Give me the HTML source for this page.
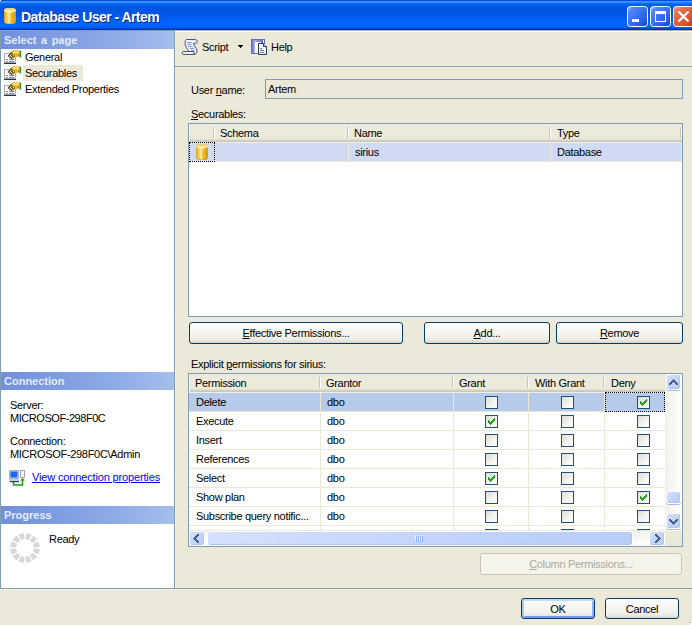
<!DOCTYPE html><html><head><meta charset="utf-8"><style>
*{box-sizing:border-box;margin:0;padding:0}
html,body{width:692px;height:625px;overflow:hidden;background:#ECE9D8}
body{position:relative;font-family:"Liberation Sans",sans-serif;font-size:11px;color:#000;letter-spacing:-0.3px}
.a{position:absolute}
.t{position:absolute;white-space:pre;line-height:13px}
svg{position:absolute;overflow:visible}
#title{left:0;top:0;width:692px;height:30px;background:linear-gradient(#0050E6 0px,#0050E6 1px,#3D95FF 1px,#3D95FF 2px,#2C89FF 2px,#2C89FF 3px,#0B6FFB 3px,#0B6FFB 4px,#0063F2 4px,#0063F2 5px,#005CEA 5px,#005CEA 6px,#0059E6 6px,#0059E6 7px,#0057E4 7px,#0057E4 8px,#0055E1 8px,#0055E1 9px,#0055E1 9px,#0055E1 10px,#0055E1 10px,#0055E1 11px,#0055E2 11px,#0055E2 12px,#0056E4 12px,#0056E4 13px,#0057E6 13px,#0057E6 14px,#0058E8 14px,#0058E8 15px,#0059EA 15px,#0059EA 16px,#005AEC 16px,#005AEC 17px,#005CEF 17px,#005CEF 18px,#005EF2 18px,#005EF2 19px,#0060F5 19px,#0060F5 20px,#0062F8 20px,#0062F8 21px,#0064FB 21px,#0064FB 22px,#0066FE 22px,#0066FE 23px,#0066FF 23px,#0066FF 24px,#0066FF 24px,#0066FF 25px,#0066FF 25px,#0066FF 26px,#0064FC 26px,#0064FC 27px,#005CF2 27px,#005CF2 28px,#0048D8 28px,#0048D8 29px,#0032B4 29px,#0032B4 30px)}
.ttl{left:21px;top:9px;font:bold 14px "Liberation Sans",sans-serif;color:#fff;letter-spacing:-0.55px;text-shadow:1px 1px 0 #0A1A80;line-height:17px}
.side{left:0;top:30px;width:175px;height:559px;background:#fff;border-top:1px solid #7F9DB9;border-left:1px solid #7F9DB9;border-right:1px solid #7F9DB9;border-bottom:1px solid #7F9DB9}
.hdr{position:absolute;left:1px;width:173px;height:18px;background:linear-gradient(90deg,#7190DC,#8AA8E6 60%,#A6BEEC);color:#E4ECFC;font-weight:bold;letter-spacing:0;word-spacing:1.5px;padding-left:3px;line-height:18px;font-size:11px}
.border{border:1px solid #7F9DB9}
.btn{position:absolute;height:22px;border:1px solid #003C74;border-radius:3px;background:linear-gradient(#FFFFFF,#F8F8F5 25%,#F1F0EB 75%,#E8E6DE 88%,#D8D2C6);text-align:center;line-height:21px}
.def{box-shadow:inset 0 2px 0 #C6DEFC,inset 2px 0 0 #A8C6F2,inset 0 -2px 0 #7A98EC,inset -2px 0 0 #90B0F0}
.grid{position:absolute;background:#fff;border:1px solid #7F9DB9;overflow:hidden}
.gh{position:absolute;left:0;top:0;height:19px;box-shadow:inset 1px 0 0 #fff;background:linear-gradient(#EBEADB 0,#EBEADB 15px,#E2DECD 15px,#E2DECD 16px,#D6D2C0 16px,#D6D2C0 17px,#CBC7B8 17px,#CBC7B8 18px,#F2F0E6 18px)}
.sep{position:absolute;top:3px;width:2px;height:11px;border-left:1px solid #C7C5B2;border-right:1px solid #fff}
.gl{background:#EBE8D8}
.glv{position:absolute;width:1px;background:#EBE8D8}
.cb{position:absolute;width:13px;height:13px;border:1px solid #1C5180;background:linear-gradient(135deg,#DCDCD7,#F5F4EF 60%,#FFFFFF)}
.u{text-decoration:underline}
.sb{border:1px solid #fff;border-radius:3px;background:linear-gradient(135deg,#D4E0FD,#C6D5FB 45%,#B8CCF8);box-shadow:inset -1px -1px 0 #B0C4F0}
</style></head><body>
<div id="title" class="a"></div><div class="a" style="left:0;top:0;width:1px;height:1px;background:#F0F0F0"></div>
<div class="t ttl">Database User - Artem</div>
<svg width="12" height="16" style="left:4px;top:8px"><defs><linearGradient id="dbt" x1="0" x2="1" y1="0" y2="0"><stop offset="0" stop-color="#D9A020"/><stop offset="0.15" stop-color="#F0C040"/><stop offset="0.45" stop-color="#F8EAA8"/><stop offset="0.6" stop-color="#EDB828"/><stop offset="1" stop-color="#D89A00"/></linearGradient><linearGradient id="dbtt" x1="0" x2="0" y1="0" y2="1"><stop offset="0" stop-color="#E8C860"/><stop offset="1" stop-color="#FFF8D0"/></linearGradient></defs><path d="M2 0 H10 L12 2 V14 L10 16 H2 L0 14 V2 Z" fill="url(#dbt)"/><path d="M2 0 H10 L12 2 V3 Q6 6 0 3 V2 Z" fill="url(#dbtt)"/><path d="M0 14 Q6 17 12 14 L10 16 H2 Z" fill="#C08810" opacity="0.6"/></svg>
<svg width="21" height="21" style="left:627px;top:6px"><defs><linearGradient id="gmin" x1="0" y1="0" x2="1" y2="1"><stop offset="0" stop-color="#A8C4FC"/><stop offset="0.2" stop-color="#4A86F6"/><stop offset="0.7" stop-color="#2A62EA"/><stop offset="1" stop-color="#1840C8"/></linearGradient></defs><rect x="0.5" y="0.5" width="20" height="20" rx="3" fill="url(#gmin)" stroke="#fff" stroke-width="1"/><rect x="5" y="13" width="7" height="3" fill="#fff"/></svg>
<svg width="21" height="21" style="left:650px;top:6px"><defs><linearGradient id="gmax" x1="0" y1="0" x2="1" y2="1"><stop offset="0" stop-color="#A8C4FC"/><stop offset="0.2" stop-color="#4A86F6"/><stop offset="0.7" stop-color="#2A62EA"/><stop offset="1" stop-color="#1840C8"/></linearGradient></defs><rect x="0.5" y="0.5" width="20" height="20" rx="3" fill="url(#gmax)" stroke="#fff" stroke-width="1"/><path d="M5 5 H16 V16 H5 Z M6 8 V15 H15 V8 Z" fill="#fff" fill-rule="evenodd"/></svg>
<svg width="21" height="21" style="left:673px;top:6px"><defs><linearGradient id="gc" x1="0" y1="0" x2="1" y2="1"><stop offset="0" stop-color="#F4A48A"/><stop offset="0.25" stop-color="#E4704E"/><stop offset="0.7" stop-color="#D8562E"/><stop offset="1" stop-color="#C03A14"/></linearGradient></defs><rect x="0.5" y="0.5" width="20" height="20" rx="3" fill="url(#gc)" stroke="#fff" stroke-width="1"/><path d="M5.5 5.5 L15.5 15.5 M15.5 5.5 L5.5 15.5" stroke="#fff" stroke-width="2.2"/></svg>
<div class="a side"></div>
<div class="hdr" style="top:31px">Select a page</div>
<svg width="18" height="16" style="left:3px;top:49px"><rect x="1.5" y="4.5" width="11" height="9" fill="#fff" stroke="#A8A8BC" stroke-width="1"/><rect x="1" y="4" width="12" height="1" fill="#A8A8F0"/><rect x="1" y="14" width="12" height="1" fill="#303030"/><rect x="3" y="10" width="2" height="1" fill="#8080D0"/><rect x="6" y="10" width="5" height="1" fill="#8080D0"/><rect x="3" y="12" width="2" height="1" fill="#8080D0"/><rect x="6" y="12" width="5" height="1" fill="#8080D0"/><path d="M7.5 3 C9.5 0.8 13 0.5 16.5 1.5 L16.5 7 C14.5 8 12.5 8 10.5 9 L7.5 6 Z" fill="#F4B020"/><path d="M10 2 C12.5 1.2 14.5 1.3 16 2 L15.5 4.5 C13.5 4 11.5 4 10 5 Z" fill="#FFDC70"/><path d="M15.5 5 L16.5 5 L16.5 7 L14 7.8 Z" fill="#E08000"/><path d="M4.5 7 L8 3 L12 7 L8.5 11 Z" fill="#5A5A30"/><path d="M6 7h1v1h-1zM8 5h1v1h-1zM8 7h1v1h-1zM7 9h1v1h-1zM9 8h1v1h-1zM10 6h1v1h-1zM7 6h1v1h-1z" fill="#F8E838"/><rect x="16.5" y="1.5" width="1.5" height="7" fill="#20A030"/></svg>
<svg width="18" height="16" style="left:3px;top:65px"><rect x="1.5" y="4.5" width="11" height="9" fill="#fff" stroke="#A8A8BC" stroke-width="1"/><rect x="1" y="4" width="12" height="1" fill="#A8A8F0"/><rect x="1" y="14" width="12" height="1" fill="#303030"/><rect x="3" y="10" width="2" height="1" fill="#8080D0"/><rect x="6" y="10" width="5" height="1" fill="#8080D0"/><rect x="3" y="12" width="2" height="1" fill="#8080D0"/><rect x="6" y="12" width="5" height="1" fill="#8080D0"/><path d="M7.5 3 C9.5 0.8 13 0.5 16.5 1.5 L16.5 7 C14.5 8 12.5 8 10.5 9 L7.5 6 Z" fill="#F4B020"/><path d="M10 2 C12.5 1.2 14.5 1.3 16 2 L15.5 4.5 C13.5 4 11.5 4 10 5 Z" fill="#FFDC70"/><path d="M15.5 5 L16.5 5 L16.5 7 L14 7.8 Z" fill="#E08000"/><path d="M4.5 7 L8 3 L12 7 L8.5 11 Z" fill="#5A5A30"/><path d="M6 7h1v1h-1zM8 5h1v1h-1zM8 7h1v1h-1zM7 9h1v1h-1zM9 8h1v1h-1zM10 6h1v1h-1zM7 6h1v1h-1z" fill="#F8E838"/><rect x="16.5" y="1.5" width="1.5" height="7" fill="#20A030"/></svg>
<svg width="18" height="16" style="left:3px;top:81px"><rect x="1.5" y="4.5" width="11" height="9" fill="#fff" stroke="#A8A8BC" stroke-width="1"/><rect x="1" y="4" width="12" height="1" fill="#A8A8F0"/><rect x="1" y="14" width="12" height="1" fill="#303030"/><rect x="3" y="10" width="2" height="1" fill="#8080D0"/><rect x="6" y="10" width="5" height="1" fill="#8080D0"/><rect x="3" y="12" width="2" height="1" fill="#8080D0"/><rect x="6" y="12" width="5" height="1" fill="#8080D0"/><path d="M7.5 3 C9.5 0.8 13 0.5 16.5 1.5 L16.5 7 C14.5 8 12.5 8 10.5 9 L7.5 6 Z" fill="#F4B020"/><path d="M10 2 C12.5 1.2 14.5 1.3 16 2 L15.5 4.5 C13.5 4 11.5 4 10 5 Z" fill="#FFDC70"/><path d="M15.5 5 L16.5 5 L16.5 7 L14 7.8 Z" fill="#E08000"/><path d="M4.5 7 L8 3 L12 7 L8.5 11 Z" fill="#5A5A30"/><path d="M6 7h1v1h-1zM8 5h1v1h-1zM8 7h1v1h-1zM7 9h1v1h-1zM9 8h1v1h-1zM10 6h1v1h-1zM7 6h1v1h-1z" fill="#F8E838"/><rect x="16.5" y="1.5" width="1.5" height="7" fill="#20A030"/></svg>
<div class="t" style="left:25px;top:51px">General</div>
<div class="a" style="left:23px;top:65px;width:60px;height:16px;background:#ECE9D8"></div>
<div class="t" style="left:25px;top:67px">Securables</div>
<div class="t" style="left:25px;top:83px">Extended Properties</div>
<div class="hdr" style="top:372px">Connection</div>
<div class="t" style="left:10px;top:399px">Server:</div>
<div class="t" style="left:10px;top:412px;letter-spacing:-0.45px">MICROSOF-298F0C</div>
<div class="t" style="left:10px;top:435px">Connection:</div>
<div class="t" style="left:10px;top:448px">MICROSOF-298F0C\Admin</div>
<div class="t u" style="left:32px;top:471px;color:#0000FF;letter-spacing:-0.15px">View connection properties</div>
<svg width="17" height="17" style="left:9px;top:469px"><rect x="0.5" y="1.5" width="9" height="8" fill="#D8DCE8" stroke="#A8B0C0"/><rect x="1.5" y="2.5" width="7" height="6" fill="#1A68F0"/><rect x="0" y="10" width="10" height="3" fill="#C8CCE0"/><rect x="1" y="12" width="9" height="1.2" fill="#303880"/><rect x="11.5" y="1.5" width="4" height="7" fill="#F0F4FC" stroke="#A0A8B8"/><path d="M4.5 13 V16 H13.5 V10" stroke="#20A010" stroke-width="1.6" fill="none"/><path d="M11 11.5 L13.5 9 L16 11.5 Z" fill="#20A010"/></svg>
<div class="hdr" style="top:506px">Progress</div>
<div class="t" style="left:49px;top:533px">Ready</div>
<svg width="692" height="625" style="left:0;top:0"><path d="M39.97 548.92 L38.42 554.69 L33.05 552.02 L33.98 548.55 Z M37.51 556.28 L33.28 560.51 L29.97 555.50 L32.50 552.97 Z M31.69 561.42 L25.92 562.97 L25.55 556.98 L29.02 556.05 Z M24.08 562.97 L18.31 561.42 L20.98 556.05 L24.45 556.98 Z M16.72 560.51 L12.49 556.28 L17.50 552.97 L20.03 555.50 Z M11.58 554.69 L10.03 548.92 L16.02 548.55 L16.95 552.02 Z M10.03 547.08 L11.58 541.31 L16.95 543.98 L16.02 547.45 Z M12.49 539.72 L16.72 535.49 L20.03 540.50 L17.50 543.03 Z M18.31 534.58 L24.08 533.03 L24.45 539.02 L20.98 539.95 Z M25.92 533.03 L31.69 534.58 L29.02 539.95 L25.55 539.02 Z M33.28 535.49 L37.51 539.72 L32.50 543.03 L29.97 540.50 Z M38.42 541.31 L39.97 547.08 L33.98 547.45 L33.05 543.98 Z" fill="#D8D8D8"/></svg>
<div class="a" style="left:175px;top:31px;width:1px;height:557px;background:#F4F0DE"></div>
<div class="a" style="left:175px;top:30px;width:517px;height:1px;background:#BCB49C"></div>
<div class="a" style="left:175px;top:31px;width:517px;height:1px;background:#fff"></div>
<div class="a" style="left:175px;top:65px;width:517px;height:1px;background:#F4F0DE"></div>
<div class="a" style="left:175px;top:66px;width:517px;height:1px;background:#7F9DB9"></div>
<div class="a" style="left:175px;top:67px;width:517px;height:1px;background:#F6F2E2"></div>
<div class="t" style="left:202px;top:41px">Script</div>
<div class="t" style="left:271px;top:41px">Help</div>
<svg width="16" height="16" style="left:182px;top:39px"><path d="M4.5 0.5 H13.5 C15.8 0.5 15.8 4.5 13.5 4.5 H11.5 C11.5 6.5 15 9 15 12 C15 14 14 15.5 12 15.5 H7 V12.5 C6 10.5 3 8 3 4.5 C3 2 3.5 0.5 4.5 0.5 Z" fill="#EEF2FC" stroke="#4A5670" stroke-width="1"/><path d="M12 2.5 H13.5" stroke="#B8C8EC" stroke-width="1.5"/><path d="M5 3.5 H9.5 M5 5.5 H9.5 M6 7.5 H10.5 M8 9.5 H12 M9 11.5 H12.5" stroke="#7C98DC" stroke-width="1"/><path d="M1.5 12.5 H11 C12.8 12.5 12.8 15.5 11 15.5 H1.5 C-0.2 15.5 -0.2 12.5 1.5 12.5 Z" fill="#DCE4F8" stroke="#4A5670" stroke-width="1"/><path d="M2 14 H10" stroke="#F8FAFF" stroke-width="1"/></svg>
<svg width="17" height="17" style="left:251px;top:39px"><defs><linearGradient id="hb" x1="0" x2="1"><stop offset="0" stop-color="#6464C0"/><stop offset="0.25" stop-color="#A8B0F4"/><stop offset="0.5" stop-color="#8C90E0"/><stop offset="1" stop-color="#5C5CB8"/></linearGradient></defs><rect x="0.5" y="0.5" width="13" height="14" fill="url(#hb)" stroke="#6A6AB8" stroke-width="1"/><rect x="12" y="1" width="1" height="6" fill="#F0F0FF"/><rect x="4" y="3" width="6" height="11" fill="#fff"/><path d="M7.5 4.5 H12.5 L15.5 7.5 V15.5 H7.5 Z" fill="#F4F6FC" stroke="#2A3A58" stroke-width="1"/><path d="M12.5 4.5 V7.5 H15.5" fill="#D8E0F0" stroke="#2A3A58" stroke-width="1"/><path d="M9 9.5 H11 M9 11.5 H13 M9 13.5 H13" stroke="#6A7AA0" stroke-width="1"/></svg>
<div class="a" style="left:238px;top:45px;width:5px;height:1px;background:#000"></div><div class="a" style="left:239px;top:46px;width:3px;height:1px;background:#000"></div><div class="a" style="left:240px;top:47px;width:1px;height:1px;background:#000"></div>
<div class="t" style="left:191px;top:84px">User <span class="u">n</span>ame:</div>
<div class="a border" style="left:265px;top:79px;width:418px;height:20px;background:#ECE9D8"></div>
<div class="t" style="left:268px;top:83px">Artem</div>
<div class="t" style="left:191px;top:108px"><span class="u">S</span>ecurables:</div>
<div class="grid" style="left:188px;top:123px;width:495px;height:194px"><div class="gh" style="width:493px"></div><div class="sep" style="left:24px"></div><div class="sep" style="left:158px"></div><div class="sep" style="left:360px"></div><div class="sep" style="left:491px"></div><div class="t" style="left:31px;top:3px">Schema</div><div class="t" style="left:165px;top:3px">Name</div><div class="t" style="left:368px;top:3px">Type</div><div class="a" style="left:0;top:19px;width:492px;height:18px;background:#D0DAF2"></div><div class="a gl" style="left:0;top:37px;width:493px;height:1px"></div><div class="glv" style="left:25px;top:18px;height:20px"></div><div class="glv" style="left:159px;top:18px;height:20px"></div><div class="glv" style="left:361px;top:18px;height:20px"></div><div class="glv" style="left:492px;top:18px;height:20px"></div><div class="a" style="left:0;top:18px;width:26px;height:20px;border:1px dotted #000"></div><div class="t" style="left:166px;top:22px">sirius</div><svg width="12" height="16" style="left:7px;top:20px"><defs><linearGradient id="dbg" x1="0" x2="1" y1="0" y2="0"><stop offset="0" stop-color="#D9A020"/><stop offset="0.15" stop-color="#F0C040"/><stop offset="0.45" stop-color="#F8EAA8"/><stop offset="0.6" stop-color="#EDB828"/><stop offset="1" stop-color="#D89A00"/></linearGradient><linearGradient id="dbtg" x1="0" x2="0" y1="0" y2="1"><stop offset="0" stop-color="#E8C860"/><stop offset="1" stop-color="#FFF8D0"/></linearGradient></defs><path d="M2 0 H10 L12 2 V14 L10 16 H2 L0 14 V2 Z" fill="url(#dbg)"/><path d="M2 0 H10 L12 2 V3 Q6 6 0 3 V2 Z" fill="url(#dbtg)"/><path d="M0 14 Q6 17 12 14 L10 16 H2 Z" fill="#C08810" opacity="0.6"/></svg><div class="t" style="left:368px;top:22px">Database</div></div>
<div class="btn" style="left:189px;top:322px;width:214px"><span class="u">E</span>ffective Permissions...</div>
<div class="btn" style="left:424px;top:322px;width:126px"><span class="u">A</span>dd...</div>
<div class="btn" style="left:556px;top:322px;width:127px"><span class="u">R</span>emove</div>
<div class="t" style="left:191px;top:358px">Explicit <span class="u">p</span>ermissions for sirius:</div>
<div class="grid" style="left:188px;top:373px;width:495px;height:174px"><div class="gh" style="width:476px"></div><div class="sep" style="left:130px"></div><div class="sep" style="left:263px"></div><div class="sep" style="left:338px"></div><div class="sep" style="left:414px"></div><div class="t" style="left:6px;top:3px">Permission</div><div class="t" style="left:137px;top:3px">Grantor</div><div class="t" style="left:270px;top:3px">Grant</div><div class="t" style="left:346px;top:3px">With Grant</div><div class="t" style="left:422px;top:3px">Deny</div><div class="a" style="left:0;top:19px;width:476px;height:18px;background:#B6CAEA"></div><div class="a gl" style="left:0;top:37px;width:476px;height:1px"></div><div class="t" style="left:7px;top:22px">Delete</div><div class="t" style="left:138px;top:22px">dbo</div><div class="cb" style="left:296px;top:22px"></div><div class="cb" style="left:372px;top:22px"></div><div class="cb" style="left:448px;top:22px"><svg width="11" height="11" style="left:0;top:0" shape-rendering="crispEdges"><path d="M8 2h1v1h-1zM7 3h2v1h-2zM2 4h1v1h-1zM6 4h3v1h-3zM2 5h2v1h-2zM5 5h3v1h-3zM2 6h5v1h-5zM3 7h3v1h-3zM4 8h1v1h-1z" fill="#21A121"/></svg></div><div class="a gl" style="left:0;top:56px;width:476px;height:1px"></div><div class="t" style="left:7px;top:41px">Execute</div><div class="t" style="left:138px;top:41px">dbo</div><div class="cb" style="left:296px;top:41px"><svg width="11" height="11" style="left:0;top:0" shape-rendering="crispEdges"><path d="M8 2h1v1h-1zM7 3h2v1h-2zM2 4h1v1h-1zM6 4h3v1h-3zM2 5h2v1h-2zM5 5h3v1h-3zM2 6h5v1h-5zM3 7h3v1h-3zM4 8h1v1h-1z" fill="#21A121"/></svg></div><div class="cb" style="left:372px;top:41px"></div><div class="cb" style="left:448px;top:41px"></div><div class="a gl" style="left:0;top:75px;width:476px;height:1px"></div><div class="t" style="left:7px;top:60px">Insert</div><div class="t" style="left:138px;top:60px">dbo</div><div class="cb" style="left:296px;top:60px"></div><div class="cb" style="left:372px;top:60px"></div><div class="cb" style="left:448px;top:60px"></div><div class="a gl" style="left:0;top:94px;width:476px;height:1px"></div><div class="t" style="left:7px;top:79px">References</div><div class="t" style="left:138px;top:79px">dbo</div><div class="cb" style="left:296px;top:79px"></div><div class="cb" style="left:372px;top:79px"></div><div class="cb" style="left:448px;top:79px"></div><div class="a gl" style="left:0;top:113px;width:476px;height:1px"></div><div class="t" style="left:7px;top:98px">Select</div><div class="t" style="left:138px;top:98px">dbo</div><div class="cb" style="left:296px;top:98px"><svg width="11" height="11" style="left:0;top:0" shape-rendering="crispEdges"><path d="M8 2h1v1h-1zM7 3h2v1h-2zM2 4h1v1h-1zM6 4h3v1h-3zM2 5h2v1h-2zM5 5h3v1h-3zM2 6h5v1h-5zM3 7h3v1h-3zM4 8h1v1h-1z" fill="#21A121"/></svg></div><div class="cb" style="left:372px;top:98px"></div><div class="cb" style="left:448px;top:98px"></div><div class="a gl" style="left:0;top:132px;width:476px;height:1px"></div><div class="t" style="left:7px;top:117px">Show plan</div><div class="t" style="left:138px;top:117px">dbo</div><div class="cb" style="left:296px;top:117px"></div><div class="cb" style="left:372px;top:117px"></div><div class="cb" style="left:448px;top:117px"><svg width="11" height="11" style="left:0;top:0" shape-rendering="crispEdges"><path d="M8 2h1v1h-1zM7 3h2v1h-2zM2 4h1v1h-1zM6 4h3v1h-3zM2 5h2v1h-2zM5 5h3v1h-3zM2 6h5v1h-5zM3 7h3v1h-3zM4 8h1v1h-1z" fill="#21A121"/></svg></div><div class="a gl" style="left:0;top:151px;width:476px;height:1px"></div><div class="t" style="left:7px;top:136px">Subscribe query notific...</div><div class="t" style="left:138px;top:136px">dbo</div><div class="cb" style="left:296px;top:136px"></div><div class="cb" style="left:372px;top:136px"></div><div class="cb" style="left:448px;top:136px"></div><div class="a gl" style="left:0;top:170px;width:476px;height:1px"></div><div class="cb" style="left:296px;top:155px"></div><div class="cb" style="left:372px;top:155px"></div><div class="cb" style="left:448px;top:155px"></div><div class="glv" style="left:131px;top:19px;height:140px"></div><div class="glv" style="left:264px;top:19px;height:140px"></div><div class="glv" style="left:339px;top:19px;height:140px"></div><div class="glv" style="left:415px;top:19px;height:140px"></div><div class="a" style="left:416px;top:18px;width:60px;height:20px;border:1px dotted #000"></div><div class="a gl" style="left:0;top:156px;width:476px;height:1px"></div><div class="a" style="left:476px;top:0;width:17px;height:157px;background:linear-gradient(90deg,#F2F0E8,#F8F7F2 40%,#FEFEFC 85%,#FDFDFA)"></div><div class="a" style="left:0;top:157px;width:476px;height:15px;background:linear-gradient(#F2F0E8,#F8F7F2 40%,#FEFEFC 85%,#FDFDFA)"></div><div class="a" style="left:476px;top:157px;width:17px;height:15px;background:#ECE9D8"></div><div class="a sb" style="left:477px;top:0px;width:15px;height:16px;box-shadow:inset -1px -1px 0 #B0C4F0,0 1px 0 #A8BCE4"><svg width="16" height="16" style="left:-1px;top:-1px" shape-rendering="crispEdges"><path d="M7 5h1v1h-1zM6 6h1v1h-1zM7 6h1v1h-1zM8 6h1v1h-1zM5 7h1v1h-1zM6 7h1v1h-1zM7 7h1v1h-1zM8 7h1v1h-1zM9 7h1v1h-1zM4 8h1v1h-1zM5 8h1v1h-1zM6 8h1v1h-1zM8 8h1v1h-1zM9 8h1v1h-1zM10 8h1v1h-1zM3 9h1v1h-1zM4 9h1v1h-1zM5 9h1v1h-1zM9 9h1v1h-1zM10 9h1v1h-1zM11 9h1v1h-1zM3 10h1v1h-1zM4 10h1v1h-1zM10 10h1v1h-1zM11 10h1v1h-1z" fill="#4D6185"/></svg></div><div class="a sb" style="left:477px;top:117px;width:15px;height:13px;box-shadow:inset -1px -1px 0 #B0C4F0,0 1px 0 #A8BCE4"></div><div class="a sb" style="left:477px;top:139px;width:15px;height:16px;box-shadow:inset -1px -1px 0 #B0C4F0,0 1px 0 #A8BCE4"><svg width="16" height="16" style="left:-1px;top:-1px" shape-rendering="crispEdges"><path d="M7 11h1v1h-1zM6 10h1v1h-1zM7 10h1v1h-1zM8 10h1v1h-1zM5 9h1v1h-1zM6 9h1v1h-1zM7 9h1v1h-1zM8 9h1v1h-1zM9 9h1v1h-1zM4 8h1v1h-1zM5 8h1v1h-1zM6 8h1v1h-1zM8 8h1v1h-1zM9 8h1v1h-1zM10 8h1v1h-1zM3 7h1v1h-1zM4 7h1v1h-1zM5 7h1v1h-1zM9 7h1v1h-1zM10 7h1v1h-1zM11 7h1v1h-1zM3 6h1v1h-1zM4 6h1v1h-1zM10 6h1v1h-1zM11 6h1v1h-1z" fill="#4D6185"/></svg></div><div class="a sb" style="left:0px;top:157px;width:16px;height:15px"><svg width="16" height="16" style="left:-1px;top:-1px" shape-rendering="crispEdges"><path d="M4 7h1v1h-1zM5 6h1v1h-1zM5 7h1v1h-1zM5 8h1v1h-1zM6 5h1v1h-1zM6 6h1v1h-1zM6 7h1v1h-1zM6 8h1v1h-1zM6 9h1v1h-1zM7 4h1v1h-1zM7 5h1v1h-1zM7 6h1v1h-1zM7 8h1v1h-1zM7 9h1v1h-1zM7 10h1v1h-1zM8 3h1v1h-1zM8 4h1v1h-1zM8 5h1v1h-1zM8 9h1v1h-1zM8 10h1v1h-1zM8 11h1v1h-1zM9 3h1v1h-1zM9 4h1v1h-1zM9 10h1v1h-1zM9 11h1v1h-1z" fill="#4D6185"/></svg></div><div class="a sb" style="left:18px;top:157px;width:426px;height:15px"><div class="a" style="left:207px;top:3px;width:1px;height:6px;background:#EEF4FE"></div><div class="a" style="left:208px;top:4px;width:1px;height:6px;background:#8CB0F8"></div><div class="a" style="left:209px;top:3px;width:1px;height:6px;background:#EEF4FE"></div><div class="a" style="left:210px;top:4px;width:1px;height:6px;background:#8CB0F8"></div><div class="a" style="left:211px;top:3px;width:1px;height:6px;background:#EEF4FE"></div><div class="a" style="left:212px;top:4px;width:1px;height:6px;background:#8CB0F8"></div><div class="a" style="left:213px;top:3px;width:1px;height:6px;background:#EEF4FE"></div><div class="a" style="left:214px;top:4px;width:1px;height:6px;background:#8CB0F8"></div></div><div class="a sb" style="left:460px;top:157px;width:16px;height:15px"><svg width="16" height="16" style="left:-1px;top:-1px" shape-rendering="crispEdges"><path d="M11 7h1v1h-1zM10 6h1v1h-1zM10 7h1v1h-1zM10 8h1v1h-1zM9 5h1v1h-1zM9 6h1v1h-1zM9 7h1v1h-1zM9 8h1v1h-1zM9 9h1v1h-1zM8 4h1v1h-1zM8 5h1v1h-1zM8 6h1v1h-1zM8 8h1v1h-1zM8 9h1v1h-1zM8 10h1v1h-1zM7 3h1v1h-1zM7 4h1v1h-1zM7 5h1v1h-1zM7 9h1v1h-1zM7 10h1v1h-1zM7 11h1v1h-1zM6 3h1v1h-1zM6 4h1v1h-1zM6 10h1v1h-1zM6 11h1v1h-1z" fill="#4D6185"/></svg></div></div>
<div class="btn" style="left:480px;top:553px;width:202px;height:22px;border-color:#C9C7BA;color:#ACA899;background:#F5F4EA"><span class="u">C</span>olumn Permissions...</div>
<div class="a" style="left:0;top:588px;width:692px;height:1px;background:#7F9DB9"></div>
<div class="a" style="left:0;top:589px;width:692px;height:1px;background:#F6F2E2"></div>
<div class="btn def" style="left:521px;top:598px;width:74px;height:21px">OK</div>
<div class="btn" style="left:605px;top:598px;width:74px;height:21px">Cancel</div>
<div class="a" style="left:689px;top:622px;width:1px;height:1px;background:#ACA899"></div><div class="a" style="left:690px;top:623px;width:2px;height:2px;background:#fff"></div>
</body></html>
